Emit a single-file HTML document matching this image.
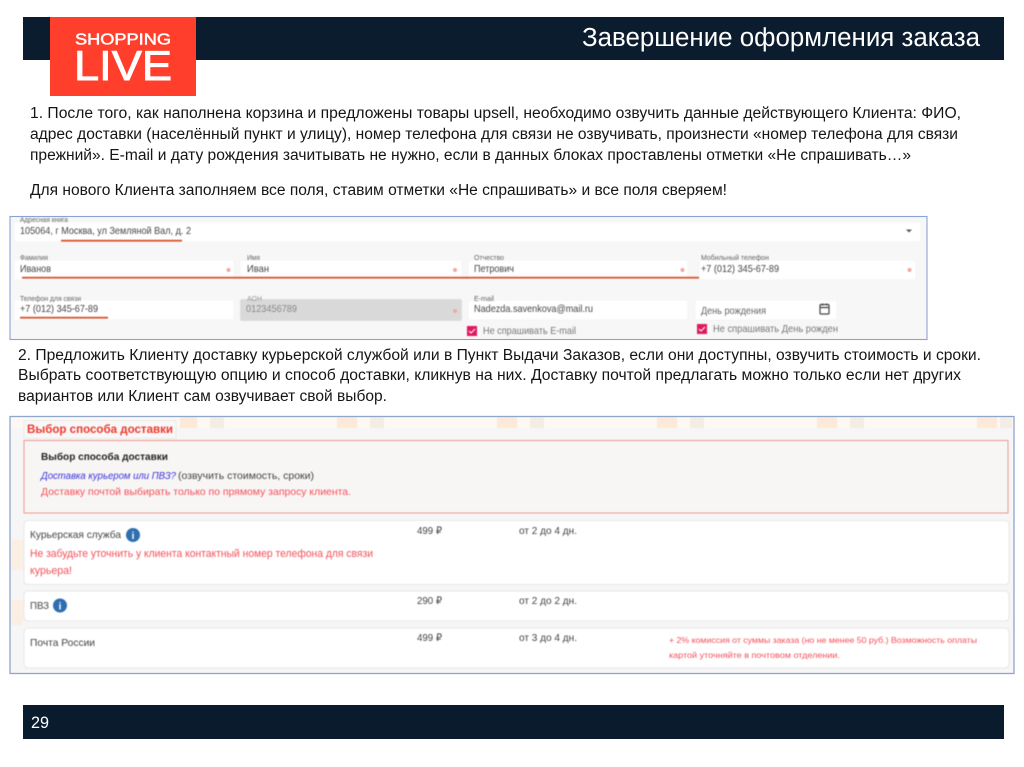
<!DOCTYPE html>
<html lang="ru"><head><meta charset="utf-8"><title>Завершение оформления заказа</title>
<style>
html,body{margin:0;padding:0;background:#fff;width:1024px;height:767px;overflow:hidden}
svg{display:block;font-family:"Liberation Sans",sans-serif}
.b text{font-size:15.5px;fill:#151515}
.s{filter:blur(.45px)}
.f{font-size:10.5px;fill:#444}
.l{font-size:7px;fill:#666}
.d{font-size:10.500px;fill:#444}
.r{fill:#f2505a}
</style></head><body>
<svg width="1024" height="767" viewBox="0 0 1024 767">
<rect x="23" y="17" width="981" height="43" fill="#0c1c2f"/>
<rect x="23" y="705" width="981" height="34" fill="#0a1b2e"/>
<rect x="50" y="17" width="146" height="79" fill="#ff3f2b"/>
<g style="filter:blur(.3px)">
<text x="75" y="44.500" font-size="16" fill="#fff" stroke="#fff" stroke-width=".5" textLength="96" lengthAdjust="spacingAndGlyphs">SHOPPING</text>
<text x="74" y="80" font-size="42" fill="#fff" stroke="#fff" stroke-width=".9" textLength="98" lengthAdjust="spacingAndGlyphs">LIVE</text>
</g>
<text x="582" y="46" font-size="25.500" fill="#fff" textLength="398" lengthAdjust="spacingAndGlyphs">Завершение оформления заказа</text>
<text x="31" y="728" font-size="17" fill="#fff" textLength="18" lengthAdjust="spacingAndGlyphs">29</text>

<g class="b">
<text x="30" y="118" textLength="931" lengthAdjust="spacingAndGlyphs">1. После того, как наполнена корзина и предложены товары upsell, необходимо озвучить данные действующего Клиента: ФИО,</text>
<text x="30" y="139" textLength="928" lengthAdjust="spacingAndGlyphs">адрес доставки (населённый пункт и улицу), номер телефона для связи не озвучивать, произнести «номер телефона для связи</text>
<text x="30" y="160" textLength="881" lengthAdjust="spacingAndGlyphs">прежний». E-mail и дату рождения зачитывать не нужно, если в данных блоках проставлены отметки «Не спрашивать…»</text>
<text x="30" y="195" textLength="697" lengthAdjust="spacingAndGlyphs">Для нового Клиента заполняем все поля, ставим отметки «Не спрашивать» и все поля сверяем!</text>
<text x="18" y="360" textLength="963" lengthAdjust="spacingAndGlyphs">2. Предложить Клиенту доставку курьерской службой или в Пункт Выдачи Заказов, если они доступны, озвучить стоимость и сроки.</text>
<text x="18" y="380" textLength="943" lengthAdjust="spacingAndGlyphs">Выбрать соответствующую опцию и способ доставки, кликнув на них. Доставку почтой предлагать можно только если нет других</text>
<text x="18" y="401" textLength="369" lengthAdjust="spacingAndGlyphs">вариантов или Клиент сам озвучивает свой выбор.</text>
</g>

<g class="s">
<rect x="10" y="216.500" width="917" height="123" fill="#f7f7f7"/>
<g fill="#fff" stroke="#efefef" stroke-width=".6">
<rect x="14" y="222" width="907" height="20" rx="2"/>
<rect x="14" y="260" width="220" height="20" rx="2"/>
<rect x="240" y="260" width="222" height="20" rx="2"/>
<rect x="468" y="260" width="220" height="20" rx="2"/>
<rect x="699" y="260" width="217" height="20" rx="2"/>
<rect x="14" y="300" width="220" height="20" rx="2"/>
<rect x="240" y="299" width="222" height="22" rx="2" fill="#d9d9d9"/>
<rect x="468" y="300" width="220" height="20" rx="2"/>
<rect x="695" y="300" width="142" height="20" rx="2"/>
</g>
<text class="l" x="20" y="222" textLength="48" lengthAdjust="spacingAndGlyphs">Адресная книга</text>
<text class="f" x="20" y="234" textLength="171" lengthAdjust="spacingAndGlyphs">105064, г Москва, ул Земляной Вал, д. 2</text>
<path d="M906 229.500h6l-3 3z" fill="#555"/>
<text class="l" x="20" y="260" textLength="28" lengthAdjust="spacingAndGlyphs">Фамилия</text>
<text class="f" x="20" y="272" textLength="31" lengthAdjust="spacingAndGlyphs">Иванов</text>
<text class="l" x="247" y="260" textLength="13" lengthAdjust="spacingAndGlyphs">Имя</text>
<text class="f" x="247" y="272" textLength="22" lengthAdjust="spacingAndGlyphs">Иван</text>
<text class="l" x="474" y="260" textLength="30" lengthAdjust="spacingAndGlyphs">Отчество</text>
<text class="f" x="474" y="272" textLength="40" lengthAdjust="spacingAndGlyphs">Петрович</text>
<text class="l" x="701" y="260" textLength="68" lengthAdjust="spacingAndGlyphs">Мобильный телефон</text>
<text class="f" x="701" y="272" textLength="78" lengthAdjust="spacingAndGlyphs">+7 (012) 345-67-89</text>
<text class="l" x="20" y="301" textLength="61" lengthAdjust="spacingAndGlyphs">Телефон для связи</text>
<text class="f" x="20" y="312" textLength="78" lengthAdjust="spacingAndGlyphs">+7 (012) 345-67-89</text>
<text class="l" x="247" y="301" textLength="15" lengthAdjust="spacingAndGlyphs" style="fill:#999">АОН</text>
<text class="f" x="246" y="312" textLength="51" lengthAdjust="spacingAndGlyphs" style="fill:#888">0123456789</text>
<text class="l" x="474" y="301" textLength="20" lengthAdjust="spacingAndGlyphs">E-mail</text>
<text class="f" x="474" y="312" textLength="119" lengthAdjust="spacingAndGlyphs">Nadezda.savenkova@mail.ru</text>
<text class="f" x="701" y="314" textLength="65" lengthAdjust="spacingAndGlyphs" style="fill:#666">День рождения</text>
<g fill="none" stroke="#444" stroke-width="1.200"><rect x="820" y="304.500" width="9" height="9.500" rx="1"/><path d="M820 307.500h9M822.500 303.500v2M826.500 303.500v2"/></g>
<g fill="#f4a5a5"><circle cx="228.500" cy="270" r="2"/><circle cx="455" cy="270" r="2"/><circle cx="682.500" cy="270" r="2"/><circle cx="909.500" cy="270" r="2"/><circle cx="455" cy="311" r="2"/></g>
<g fill="#d9532c">
<rect x="61" y="239.800" width="121" height="1.800"/>
<rect x="22" y="276.800" width="677" height="1.800"/>
<rect x="20" y="316.800" width="88" height="1.800"/>
</g>
<rect x="467" y="326" width="10" height="10" fill="#e0195f"/>
<path d="M469 331l2 2 4-4" fill="none" stroke="#fff" stroke-width="1"/>
<text class="f" x="483" y="334" textLength="93" lengthAdjust="spacingAndGlyphs" style="fill:#777">Не спрашивать E-mail</text>
<rect x="697" y="324" width="10" height="10" fill="#e0195f"/>
<path d="M699 329l2 2 4-4" fill="none" stroke="#fff" stroke-width="1"/>
<text class="f" x="713" y="332" textLength="125" lengthAdjust="spacingAndGlyphs" style="fill:#777">Не спрашивать День рожден</text>
</g>
<rect x="10" y="216.500" width="917" height="123" fill="none" stroke="#8ba3d4" stroke-width="1.100"/>

<g class="s">
<rect x="10" y="416.500" width="1004" height="257" fill="#f6f6f6"/>
<rect x="11" y="417" width="1002" height="11" fill="#fdf8f2"/>
<g fill="#fde9d8">
<rect x="180" y="417" width="17" height="11"/><rect x="337" y="417" width="20" height="11"/><rect x="497" y="417" width="20" height="11"/><rect x="657" y="417" width="20" height="11"/><rect x="817" y="417" width="20" height="11"/><rect x="977" y="417" width="20" height="11"/>
</g>
<g fill="#f5ece4">
<rect x="210" y="417" width="14" height="11"/><rect x="370" y="417" width="14" height="11"/><rect x="530" y="417" width="14" height="11"/><rect x="690" y="417" width="14" height="11"/><rect x="850" y="417" width="14" height="11"/><rect x="1000" y="417" width="12" height="11"/>
</g>
<rect x="11" y="540" width="12" height="30" fill="#fbeee2"/><rect x="11" y="600" width="12" height="25" fill="#fbeee2"/>
<rect x="24" y="420.500" width="152" height="18" fill="#f8f8f8" stroke="#e4e4e4" stroke-width=".7"/>
<text x="27" y="433" font-size="12" font-weight="700" fill="#f0372b" textLength="146" lengthAdjust="spacingAndGlyphs">Выбор способа доставки</text>
<rect x="24" y="440.500" width="984" height="72.500" fill="#f8f6f5" stroke="#ea8e86" stroke-width=".9"/>
<text x="41" y="460" font-size="10.500" font-weight="700" fill="#222" textLength="127" lengthAdjust="spacingAndGlyphs">Выбор способа доставки</text>
<text x="41" y="479" font-size="10" font-style="italic" fill="#3a32d8" textLength="135" lengthAdjust="spacingAndGlyphs">Доставка курьером или ПВЗ?</text>
<text class="d" x="178" y="479" textLength="136" lengthAdjust="spacingAndGlyphs">(озвучить стоимость, сроки)</text>
<text class="r" x="41" y="495" font-size="10.500" textLength="310" lengthAdjust="spacingAndGlyphs">Доставку почтой выбирать только по прямому запросу клиента.</text>
<g fill="#fff" stroke="#e2e2e2" stroke-width=".8">
<rect x="24" y="520.500" width="985" height="64" rx="4"/>
<rect x="24" y="591" width="985" height="30" rx="4"/>
<rect x="24" y="628" width="985" height="40" rx="4"/>
</g>
<text class="d" x="30" y="538" textLength="91" lengthAdjust="spacingAndGlyphs">Курьерская служба</text>
<circle cx="133" cy="535" r="7" fill="#2f6fb0"/><text x="133" y="539" font-size="10" font-weight="700" fill="#fff" text-anchor="middle">i</text>
<text class="r" x="30" y="557" font-size="11" textLength="343" lengthAdjust="spacingAndGlyphs">Не забудьте уточнить у клиента контактный номер телефона для связи</text>
<text class="r" x="30" y="574" font-size="11" textLength="42" lengthAdjust="spacingAndGlyphs">курьера!</text>
<text class="d" x="417" y="534" textLength="25" lengthAdjust="spacingAndGlyphs">499 ₽</text>
<text class="d" x="519" y="534" textLength="58" lengthAdjust="spacingAndGlyphs">от 2 до 4 дн.</text>
<text class="d" x="30" y="609" textLength="19" lengthAdjust="spacingAndGlyphs">ПВЗ</text>
<circle cx="60" cy="605.500" r="7" fill="#2f6fb0"/><text x="60" y="609.500" font-size="10" font-weight="700" fill="#fff" text-anchor="middle">i</text>
<text class="d" x="417" y="604" textLength="25" lengthAdjust="spacingAndGlyphs">290 ₽</text>
<text class="d" x="519" y="604" textLength="58" lengthAdjust="spacingAndGlyphs">от 2 до 2 дн.</text>
<text class="d" x="30" y="646" textLength="65" lengthAdjust="spacingAndGlyphs">Почта России</text>
<text class="d" x="417" y="641" textLength="25" lengthAdjust="spacingAndGlyphs">499 ₽</text>
<text class="d" x="519" y="641" textLength="58" lengthAdjust="spacingAndGlyphs">от 3 до 4 дн.</text>
<text class="r" x="669" y="643" font-size="8.500" textLength="308" lengthAdjust="spacingAndGlyphs">+ 2% комиссия от суммы заказа (но не менее 50 руб.) Возможность оплаты</text>
<text class="r" x="669" y="658" font-size="8.500" textLength="171" lengthAdjust="spacingAndGlyphs">картой уточняйте в почтовом отделении.</text>
</g>
<rect x="10" y="416.500" width="1004" height="257" fill="none" stroke="#8fa6cc" stroke-width="1.300"/>
</svg>
</body></html>
